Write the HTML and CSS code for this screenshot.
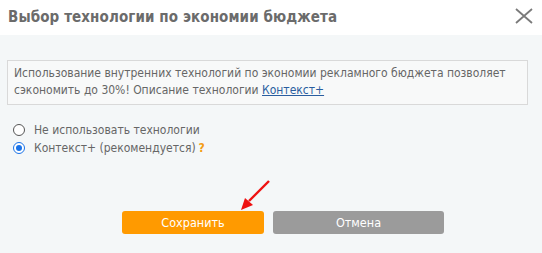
FILE: index.html
```html
<!DOCTYPE html>
<html>
<head>
<meta charset="utf-8">
<link rel="stylesheet" href="styles.css">
</head>
<body>
<div class="dialog">
  <div class="header">
    <div class="title">Выбор технологии по экономии бюджета</div>
    <svg class="close" width="18" height="16" viewBox="0 0 18 16"><path d="M1 1 L17 15 M17 1 L1 15" stroke="#7a7a7a" stroke-width="1.8" fill="none"/></svg>
  </div>
  <div class="body">
    <div class="info">Использование внутренних технологий по экономии рекламного бюджета позволяет сэкономить до 30%! Описание технологии <a href="#" class="link">Контекст+</a></div>
    <div class="options">
      <label class="opt"><span class="radio"></span>Не использовать технологии</label>
      <label class="opt"><span class="radio checked"></span>Контекст+ (рекомендуется)<span class="q">?</span></label>
    </div>
    <div class="buttons">
      <div class="arrow-wrap">
        <button class="btn save">Сохранить</button>
        <svg class="arrow" width="40" height="40" viewBox="0 0 40 40"><path d="M30 2 L10 22" stroke="#ee1111" stroke-width="2.4" fill="none"/><path d="M2 31 L6 19 L14 26 Z" fill="#ee1111"/></svg>
      </div>
      <button class="btn cancel">Отмена</button>
    </div>
  </div>
</div>
</body>
</html>
```
FILE: styles.css
```css
html, body { margin: 0; padding: 0; }
body { width: 542px; height: 253px; background: #f4f7f8; font-family: "DejaVu Sans Condensed", "DejaVu Sans", sans-serif; overflow: hidden; }
.dialog { display: flex; flex-direction: column; }
.header { background: #fff; height: 35px; display: flex; align-items: center; justify-content: space-between; padding: 0 9px 0 8px; }
.title { font-size: 15px; font-weight: bold; color: #6b6b6b; margin-top: -2px; letter-spacing: 0.1px; }
.close { display: block; margin-top: -4px; }
.body { padding: 25px 14px 0 7px; }
.info { border: 1px solid #d9d9d9; background: #f8f9f9; padding: 4px 6px 5px 6px; font-size: 12px; line-height: 17px; color: #666; }
.link { color: #2a5d9f; text-decoration: underline; }
.options { padding: 18px 0 0 6px; display: flex; flex-direction: column; gap: 4px; }
.opt { display: flex; align-items: center; font-size: 12px; color: #666; line-height: 14px; }
.radio { width: 10px; height: 10px; border: 1.5px solid #555; border-radius: 50%; background: #fff; margin-right: 9px; box-sizing: content-box; position: relative; }
.radio.checked { border-color: #1a73e8; background: #fff; }
.radio.checked::after { content: ""; position: absolute; left: 2px; top: 2px; width: 6px; height: 6px; border-radius: 50%; background: #1a73e8; }
.q { color: #f39c12; font-weight: bold; margin-left: 3px; }
.buttons { display: flex; gap: 9px; padding: 56px 0 0 115px; }
.arrow-wrap { position: relative; }
.arrow { position: absolute; left: 117px; top: -32px; }
.btn { width: 142px; height: 23px; border: none; border-radius: 3px; color: #fff; font-family: "DejaVu Sans Condensed", "DejaVu Sans", sans-serif; font-size: 12.5px; padding: 0; display: block; }
.save { background: #ff9a00; }
.cancel { background: #9b9b9b; width: 171px; }
```
